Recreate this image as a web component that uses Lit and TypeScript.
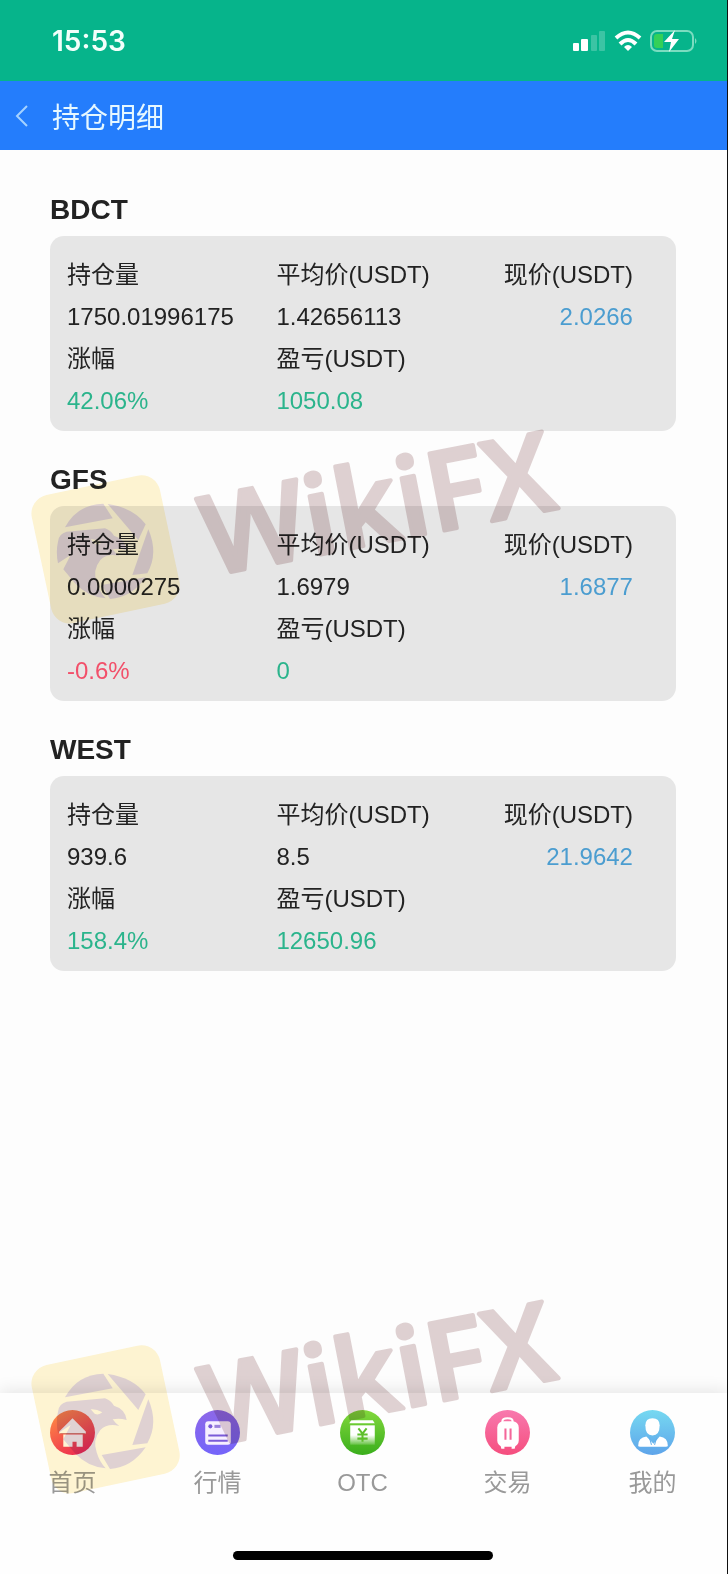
import { LitElement, html, svg, css } from "lit";
import { customElement, property } from "lit/decorators.js";

interface Position {
  name: string;
  amount: string;
  average: string;
  price: string;
  change: string;
  profit: string;
}

const positions: Position[] = [
  {
    name: "BDCT",
    amount: "1750.01996175",
    average: "1.42656113",
    price: "2.0266",
    change: "42.06%",
    profit: "1050.08",
  },
  {
    name: "GFS",
    amount: "0.0000275",
    average: "1.6979",
    price: "1.6877",
    change: "-0.6%",
    profit: "0",
  },
  {
    name: "WEST",
    amount: "939.6",
    average: "8.5",
    price: "21.9642",
    change: "158.4%",
    profit: "12650.96",
  },
];

const homeIcon = svg`
  <linearGradient id="g" x1="0" y1="0" x2="0.6" y2="1">
    <stop offset="0" stop-color="#ff9a50" />
    <stop offset="1" stop-color="#ee2f60" />
  </linearGradient>
  <circle cx="22" cy="22" r="22" fill="url(#g)" />
  <path d="M22 8 35 21v2H9v-2z" fill="#fff" />
  <path d="M13 24h19v12h-6v-5h-4v5h-9z" fill="#fff" />
  <path d="M10 23h24" stroke="#d98078" />
`;

const marketIcon = svg`
  <linearGradient id="g" x1="0" y1="0" x2="0" y2="1">
    <stop offset="0" stop-color="#8d68e8" />
    <stop offset="1" stop-color="#7464fa" />
  </linearGradient>
  <circle cx="22" cy="22" r="22" fill="url(#g)" />
  <rect x="10" y="11" width="25" height="23" rx="3" fill="#f6efff" />
  <circle cx="15" cy="16" r="2" fill="#7a5bd8" />
  <path d="M19 16h6" stroke="#9b82dc" stroke-width="3" />
  <path d="M13 25h19M13 30h19" stroke="#7a5bd8" stroke-width="2" />
`;

const otcIcon = svg`
  <linearGradient id="g" x1="0" y1="0" x2="0" y2="1">
    <stop offset="0" stop-color="#82d83c" />
    <stop offset="1" stop-color="#3aae1c" />
  </linearGradient>
  <linearGradient id="fade" x1="0" y1="0" x2="0" y2="1">
    <stop offset="0.5" stop-color="#fff" />
    <stop offset="1" stop-color="#fff" stop-opacity="0.15" />
  </linearGradient>
  <circle cx="22" cy="22" r="22" fill="url(#g)" />
  <path d="M11 10h21l2 3H9z" fill="#fff" />
  <path d="M10 15h24v19H10z" fill="url(#fade)" />
  <path d="m18 18 4 5 4-5M17 24h10M17 28h10M22 23v8"
    fill="none" stroke="#5fbf2c" stroke-width="2" />
`;

const tradeIcon = svg`
  <linearGradient id="g" x1="0" y1="0" x2="0" y2="1">
    <stop offset="0" stop-color="#f879ae" />
    <stop offset="1" stop-color="#f54e7e" />
  </linearGradient>
  <circle cx="22" cy="22" r="22" fill="url(#g)" />
  <path d="M17 13v-2q0-3 5-3t5 3v2" fill="none" stroke="#fff" stroke-width="2" />
  <rect x="12" y="11" width="21" height="25" rx="6" fill="#fff" />
  <path d="M15 34h4v4h-3zM26 34h4l-1 4h-3z" fill="#fff" />
  <path d="M20 18v11M25 18v11" stroke="#f4669a" stroke-width="2" />
`;

const mineIcon = svg`
  <linearGradient id="g" x1="0" y1="0" x2="0" y2="1">
    <stop offset="0" stop-color="#76d9f1" />
    <stop offset="1" stop-color="#5ea4ea" />
  </linearGradient>
  <circle cx="22" cy="22" r="22" fill="url(#g)" />
  <path d="M22 8q7 0 7 7 0 10-7 10t-7-10q0-7 7-7z" fill="#fff" />
  <path d="M16 26q-8 1-8 9 0 1 2 1h25q2 0 2-1 0-8-8-9l-6 7z" fill="#fff" />
  <path d="m19 27 2 7M26 27l-2 7" stroke="#62b0ec" />
`;

const tabs = [
  { label: "首页", icon: homeIcon },
  { label: "行情", icon: marketIcon },
  { label: "OTC", icon: otcIcon },
  { label: "交易", icon: tradeIcon },
  { label: "我的", icon: mineIcon },
];

@customElement("status-bar")
class StatusBar extends LitElement {
  static styles = css`
    :host {
      display: flex;
      align-items: center;
      justify-content: space-between;
      height: 81px;
      padding: 0 29px 0 52px;
      background-color: #06b48b;
      color: #f2fffb;
    }

    .time {
      font-family: Inter, sans-serif;
      font-size: 28px;
      font-weight: 600;
    }

    .icons {
      display: flex;
      align-items: center;
      gap: 8px;
    }
  `;

  render() {
    return html`
      <span class="time">15:53</span>
      <div class="icons">
        <svg width="34" height="22" viewBox="0 0 34 22" fill="#fff">
          <rect x="1" y="13" width="6" height="8" rx="1" />
          <rect x="9" y="9" width="7" height="12" rx="1" />
          <rect x="19" y="5" width="6" height="16" rx="1" opacity="0.22" />
          <rect x="27" y="1" width="6" height="20" rx="1" opacity="0.22" />
        </svg>
        <svg width="28" height="22" viewBox="0 0 28 22" fill="none" stroke="#fff" stroke-width="4">
          <path d="M2 8Q14-3 26 8" />
          <path d="M6 14Q14 6 22 14" />
          <path d="M10 17Q14 13 18 17L14 21z" fill="#fff" stroke="none" />
        </svg>
        <svg width="48" height="24" viewBox="0 0 48 24">
          <rect x="1" y="2" width="42" height="20" rx="6" fill="none" stroke="#7bdcc0" stroke-width="2" />
          <path d="M7 5h6v14H7q-3 0-3-3V8q0-3 3-3z" fill="#34d058" />
          <path d="M45 9q3 3 0 6z" fill="#7bdcc0" />
          <path d="M25 1 14 13h7l-2 10 10-13h-7z" fill="#fff" />
        </svg>
      </div>
    `;
  }
}

@customElement("position-card")
class PositionCard extends LitElement {
  static styles = css`
    :host {
      display: block;
    }

    h2 {
      margin: 0 0 6px;
      font-size: 28px;
      line-height: 40px;
      font-weight: bold;
    }

    .card {
      display: grid;
      grid-template-columns: 37% 37% 26%;
      margin: 0;
      padding: 18px 43px 9px 17px;
      border-radius: 14px;
      background-color: #e6e6e6;
      font-size: 24px;
      line-height: 42px;
      white-space: nowrap;
    }

    dd {
      margin: 0;
    }

    .price {
      text-align: right;
    }

    .price dd {
      color: #4b9dd0;
    }

    .up {
      color: #2bb48c;
    }

    .down {
      color: #f2506a;
    }
  `;

  @property({ attribute: false })
  position!: Position;

  tone(value: string) {
    return value.startsWith("-") ? "down" : "up";
  }

  render() {
    const p = this.position;
    return html`
      <h2>${p.name}</h2>
      <dl class="card">
        <div>
          <dt>持仓量</dt>
          <dd>${p.amount}</dd>
        </div>
        <div>
          <dt>平均价(USDT)</dt>
          <dd>${p.average}</dd>
        </div>
        <div class="price">
          <dt>现价(USDT)</dt>
          <dd>${p.price}</dd>
        </div>
        <div>
          <dt>涨幅</dt>
          <dd class=${this.tone(p.change)}>${p.change}</dd>
        </div>
        <div>
          <dt>盈亏(USDT)</dt>
          <dd class=${this.tone(p.profit)}>${p.profit}</dd>
        </div>
      </dl>
    `;
  }
}

@customElement("tab-item")
class TabItem extends LitElement {
  static styles = css`
    :host {
      display: block;
    }

    a {
      display: flex;
      flex-direction: column;
      align-items: center;
      gap: 13px;
      color: #999;
      font-size: 24px;
      line-height: 30px;
      text-decoration: none;
    }
  `;

  @property({ type: String })
  label = "";

  @property({ attribute: false })
  icon: unknown;

  render() {
    return html`<a href="#">
      <svg width="45" height="45" viewBox="0 0 44 44">${this.icon}</svg>
      <span>${this.label}</span>
    </a>`;
  }
}

@customElement("brand-watermark")
class BrandWatermark extends LitElement {
  static styles = css`
    :host {
      display: block;
      opacity: 0.2;
      mix-blend-mode: multiply;
      pointer-events: none;
    }

    svg {
      display: block;
    }

    text {
      font-family: "Open Sans", sans-serif;
      font-size: 110px;
      font-weight: 600;
    }
  `;

  render() {
    return html`
      <svg width="600" height="280" viewBox="0 -60 600 280" fill="#601c20">
        <rect x="10" y="64" width="131" height="131" rx="19" fill="#fdcb20" transform="rotate(-12 75 129)" />
        <g transform="translate(20 75) scale(0.3333)">
          <path d="M45 97Q82 28 160 26L188 70Z" />
          <path d="M173 27Q250 38 287 88L265 135Z" />
          <path d="M295 103Q326 175 292 235L247 240Z" />
          <path d="M155 270 287 247Q245 308 180 312Z" />
          <path
            fill-rule="evenodd"
            d="M24 140Q26 116 50 110L165 100Q182 106 192 122 226 132 230 165 207 158 188 163 196 175 208 183 172 174 151 195 127 225 140 262 148 290 167 310 113 306 75 265L40 223 62 180 24 205Q17 170 24 140ZM122 133Q138 131 157 142 146 152 134 146Z"
          />
        </g>
        <text
          x="180"
          y="156"
          stroke="#601c20"
          stroke-width="4"
          stroke-linejoin="round"
          transform="rotate(-11 180 156)"
        >WikiFX</text>
      </svg>
    `;
  }
}

@customElement("app-root")
export class AppRoot extends LitElement {
  static styles = css`
    :host {
      position: relative;
      display: flex;
      flex-direction: column;
      box-sizing: border-box;
      min-height: 100vh;
      border-right: 1px solid #111;
      background-color: #fdfdfd;
      color: #222;
      font-family: "Liberation Sans", "Noto Sans CJK SC", sans-serif;
    }

    header {
      display: flex;
      align-items: center;
      gap: 22px;
      height: 69px;
      padding: 0 14px;
      background-color: #247dfc;
      color: #e6f8ff;
    }

    .back {
      display: flex;
      padding: 0;
      border: 0;
      background: none;
    }

    h1 {
      margin: 0;
      font-size: 28px;
      font-weight: normal;
    }

    main {
      display: flex;
      flex: 1;
      flex-direction: column;
      gap: 29px;
      padding: 40px 51px 40px 50px;
    }

    footer {
      display: flex;
      flex-direction: column;
      align-items: center;
      gap: 53px;
      padding: 17px 2px 14px 0;
      background-color: #fefefe;
      box-shadow: 0 -2px 16px rgba(0, 0, 0, 0.1);
    }

    nav {
      display: grid;
      grid-template-columns: repeat(5, 1fr);
      align-self: stretch;
    }

    .indicator {
      width: 260px;
      height: 9px;
      border-radius: 5px;
      background-color: #000;
    }

    .watermark {
      position: absolute;
      top: 360px;
      left: 30px;
    }

    .watermark.low {
      top: 1230px;
    }
  `;

  render() {
    return html`
      <status-bar></status-bar>
      <header>
        <button class="back" aria-label="返回">
          <svg width="16" height="24" viewBox="0 0 16 24" fill="none" stroke="#a5d2ff" stroke-width="2">
            <path d="M13 2 3 12l10 10" />
          </svg>
        </button>
        <h1>持仓明细</h1>
      </header>
      <main>
        ${positions.map(
          (p) => html`<position-card .position=${p}></position-card>`
        )}
      </main>
      <footer>
        <nav>
          ${tabs.map(
            (tab) =>
              html`<tab-item label=${tab.label} .icon=${tab.icon}></tab-item>`
          )}
        </nav>
        <div class="indicator"></div>
      </footer>
      <brand-watermark class="watermark"></brand-watermark>
      <brand-watermark class="watermark low"></brand-watermark>
    `;
  }
}
